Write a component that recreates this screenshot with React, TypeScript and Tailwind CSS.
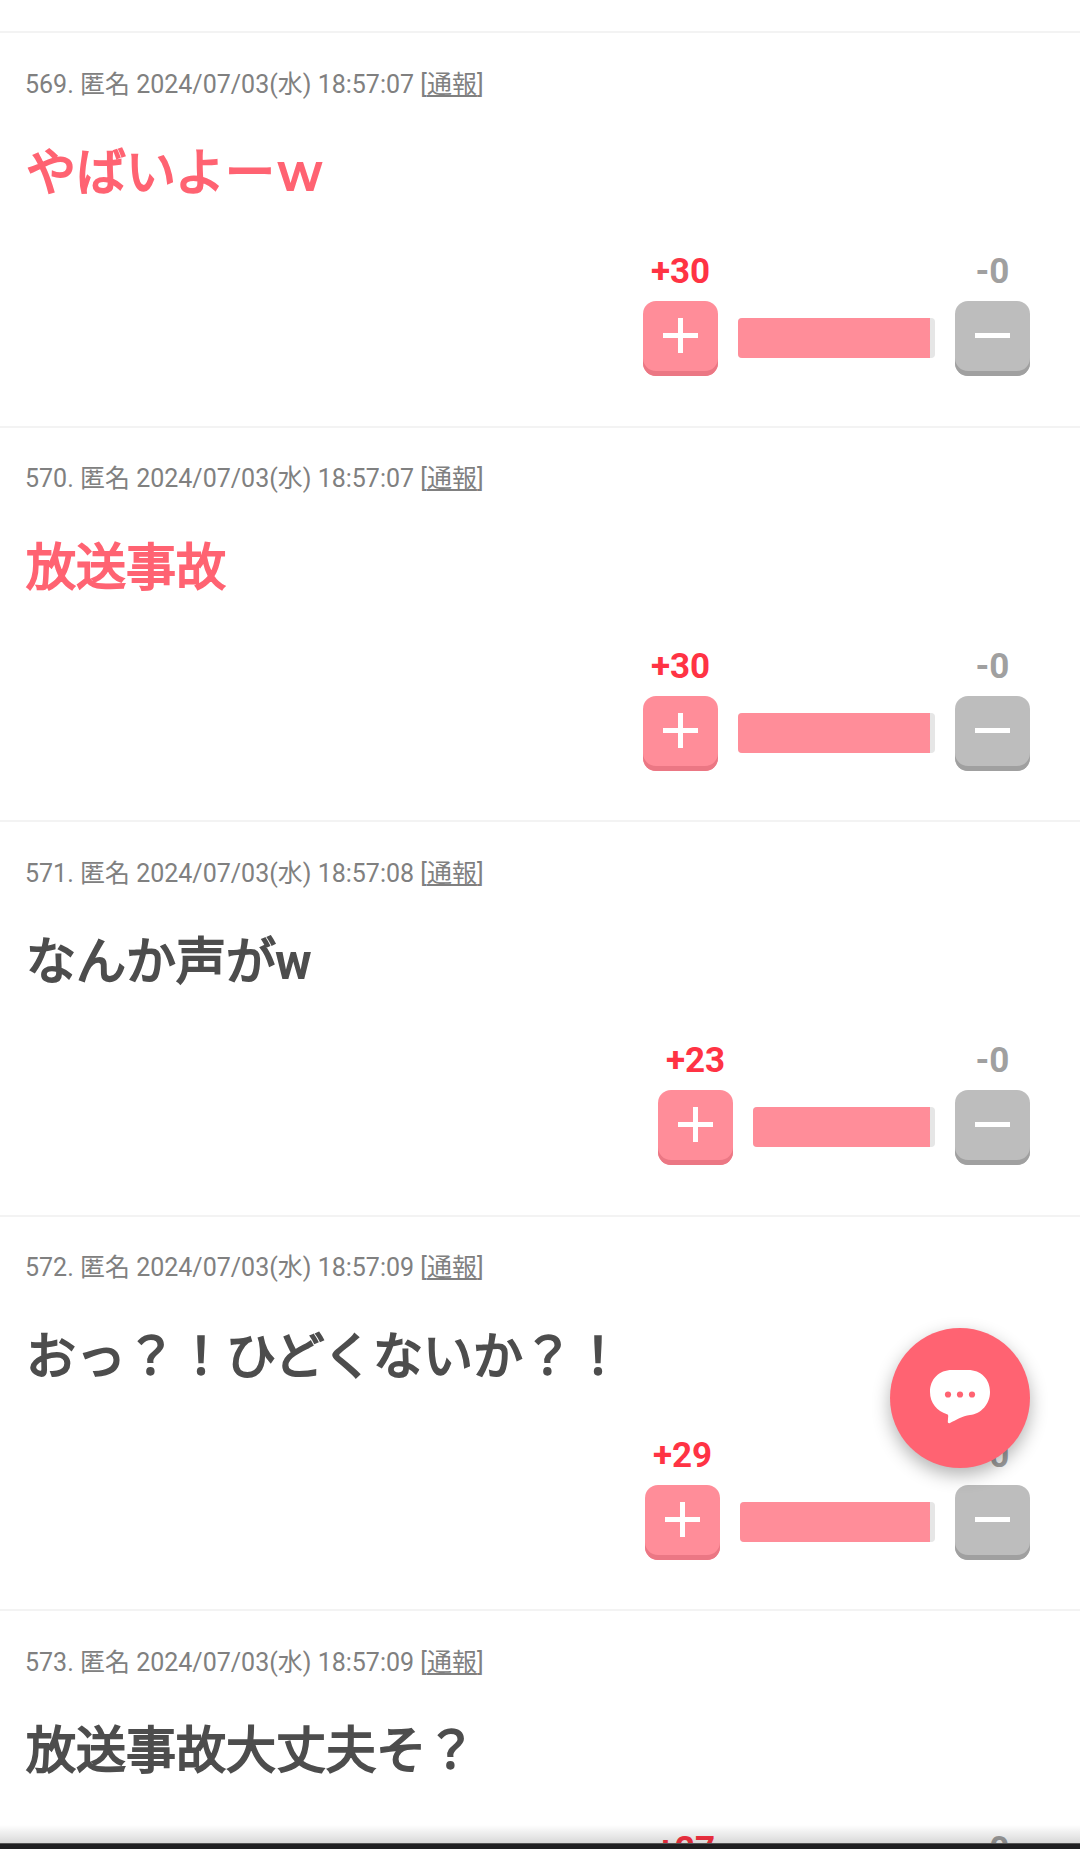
interface Comment {
  id: number;
  time: string;
  body: string;
  suffix?: string;
  plus: number;
  minus: number;
  barWidth: number;
  popular?: boolean;
}

const comments: Comment[] = [
  { id: 569, time: '18:57:07', body: 'やばいよーｗ', plus: 30, minus: 0, barWidth: 197, popular: true },
  { id: 570, time: '18:57:07', body: '放送事故', plus: 30, minus: 0, barWidth: 197, popular: true },
  { id: 571, time: '18:57:08', body: 'なんか声が', suffix: 'w', plus: 23, minus: 0, barWidth: 182 },
  { id: 572, time: '18:57:09', body: 'おっ？！ひどくないか？！', plus: 29, minus: 0, barWidth: 195 },
  { id: 573, time: '18:57:09', body: '放送事故大丈夫そ？', plus: 27, minus: 0, barWidth: 192 },
];

function PlusButton({ count }: { count: number }) {
  return (
    <div className="flex w-[75px] flex-col items-center">
      <span className="h-[49px] text-[35px] leading-[40px] font-bold text-[#ff3344]">+{count}</span>
      <button className="flex h-[75px] w-[75px] justify-center rounded-[13px] bg-[#ff8d99] pt-[17px] shadow-[inset_0_-5px_0_#eb7784]">
        <svg width="35" height="35" viewBox="0 0 35 35" fill="#fff">
          <path d="M15 0h5v15h15v5H20v15h-5V20H0v-5h15z" />
        </svg>
      </button>
    </div>
  );
}

function MinusButton({ count }: { count: number }) {
  return (
    <div className="flex w-[75px] flex-col items-center">
      <span className="h-[49px] text-[35px] leading-[40px] font-bold text-[#a0a0a0]">-{count}</span>
      <button className="flex h-[75px] w-[75px] justify-center rounded-[13px] bg-[#bdbdbd] pt-[32px] shadow-[inset_0_-5px_0_#a0a0a0]">
        <span className="h-[5px] w-[35px] bg-white" />
      </button>
    </div>
  );
}

function CommentItem({ comment }: { comment: Comment }) {
  return (
    <li className="h-[394.5px] border-t-2 border-[#f3f3f3] pr-[50px] pl-[25px]">
      <p className="h-[78px] pt-[31.3px] text-[25px] leading-[40px] whitespace-nowrap text-[#808080]">
        {comment.id}. 匿名 2024/07/03(水) {comment.time} [
        <a className="underline">通報</a>]
      </p>
      <p
        className={`mt-[25px] ml-px h-[75px] text-[50px] leading-[75px] whitespace-nowrap ${
          comment.popular ? 'text-[#ff6372]' : 'text-[#4d4d4d]'
        }`}
      >
        <span className="[-webkit-text-stroke:2px_currentColor]">{comment.body}</span>
        {comment.suffix && <span className="-ml-px font-bold">{comment.suffix}</span>}
      </p>
      <div className="mt-[41px] flex items-end justify-end gap-[20px]">
        <PlusButton count={comment.plus} />
        <div
          className="mb-[18px] h-[40px] overflow-hidden rounded-[4px] bg-[#e6e6e6] pr-[5px]"
          style={{ width: comment.barWidth }}
        >
          <div className="h-full bg-[#ff8d99]" />
        </div>
        <MinusButton count={comment.minus} />
      </div>
    </li>
  );
}

export default function App() {
  return (
    <div className="relative flex h-[1849px] w-[1080px] flex-col overflow-hidden bg-white font-['Roboto','Noto_Sans_CJK_JP',sans-serif]">
      <main className="min-h-0 flex-1 overflow-hidden pt-[31.4px]">
        <ul>
          {comments.map((comment) => (
            <CommentItem key={comment.id} comment={comment} />
          ))}
        </ul>
      </main>

      {/* Floating comment button */}
      <button className="absolute top-[1328px] left-[890px] h-[140px] w-[140px] rounded-full bg-[#ff6372] shadow-[0_7px_18px_rgba(0,0,0,0.3)]">
        <svg className="ml-[40px] -mt-[2px]" width="60" height="54" viewBox="0 0 60 54">
          <path
            d="M22 0h16c13 0 22 9 22 22c0 12-9 22-20 23c-8 1-14 5-20 8c-1.500.6-2.300-.2-2.200-1.500l.4-5.500c0-1-.4-1.400-1.200-1.700C7 41 0 33 0 22C0 9 9 0 22 0z"
            fill="#fff"
          />
          <g fill="#ff6372">
            <circle cx="18" cy="24.500" r="3.100" />
            <circle cx="30" cy="24.500" r="3.100" />
            <circle cx="42" cy="24.500" r="3.100" />
          </g>
        </svg>
      </button>

      <div className="absolute bottom-[6px] left-0 h-[18px] w-full bg-gradient-to-b from-transparent to-black/15" />
      <footer className="h-[6px] shrink-0 border-t border-[#555] bg-[#1f1f21]" />
    </div>
  );
}
